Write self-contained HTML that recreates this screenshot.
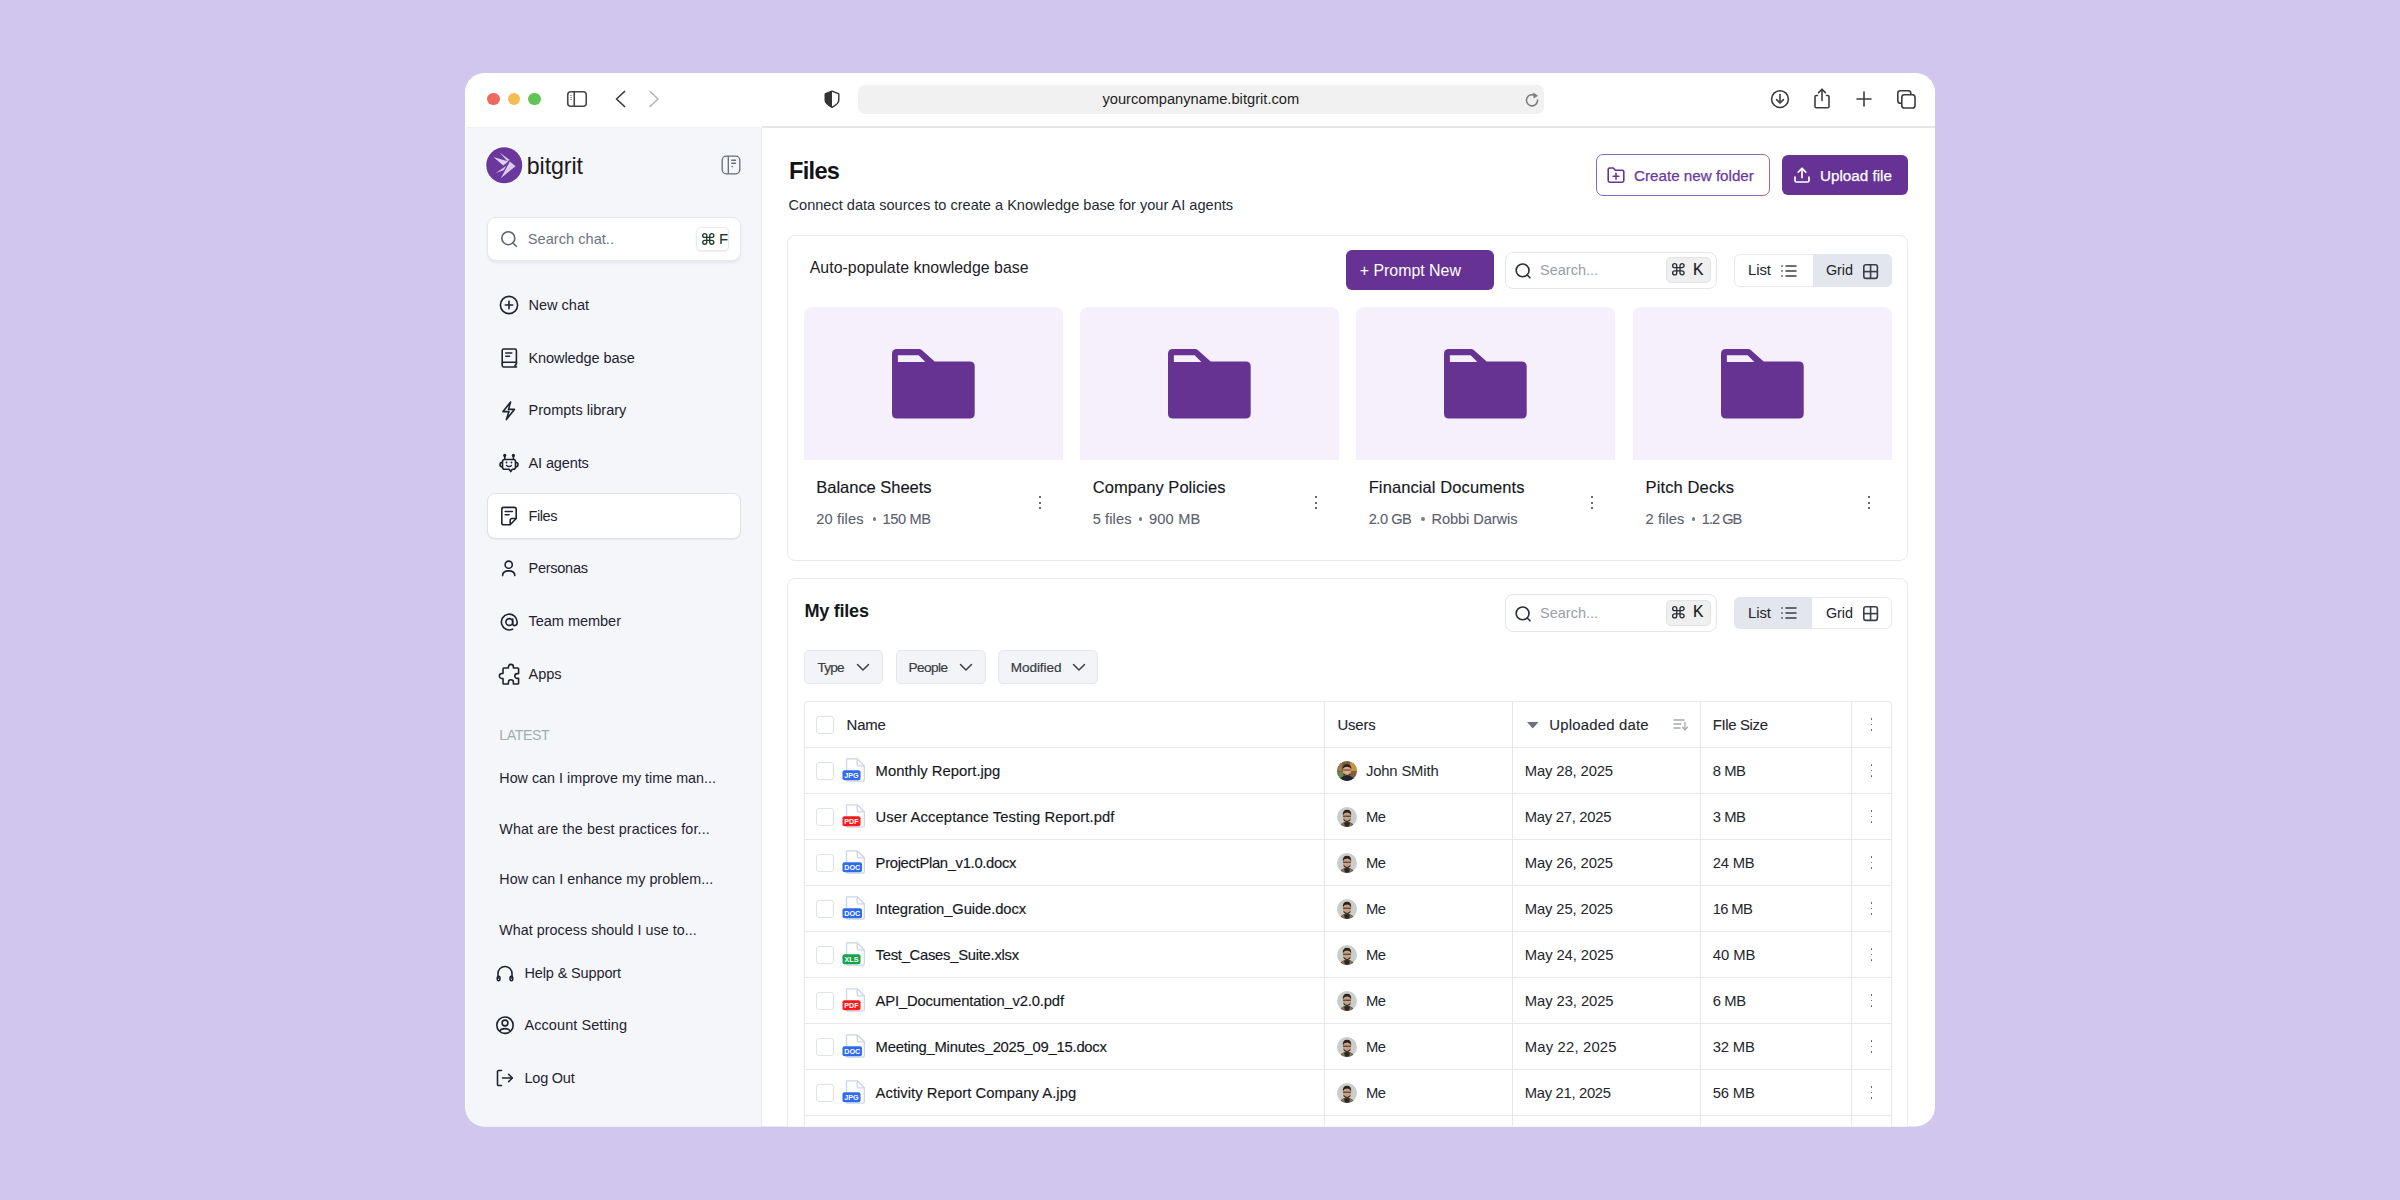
<!DOCTYPE html>
<html><head><meta charset="utf-8"><style>*{box-sizing:border-box;margin:0;padding:0}
html,body{width:2400px;height:1200px;overflow:hidden;background:#D1C6EE;font-family:"Liberation Sans",sans-serif}
#win{position:absolute;left:0;top:0;width:2400px;height:1200px;clip-path:inset(73px 465px 73.5px 465px round 20px);background:#fff}
.a{position:absolute}
.t{position:absolute;white-space:nowrap;line-height:1}
svg{position:absolute;overflow:visible}
</style></head>
<body>
<div id="win">
<div class="a" style="left:465px;top:73px;width:1470px;height:54px;background:#fff"></div>
<div class="a" style="left:762px;top:126px;width:1173px;height:1.5px;background:#E6E6E6"></div>
<div class="a" style="left:487.45px;top:92.95px;width:12.5px;height:12.5px;border-radius:50%;background:#EE6A5F"></div>
<div class="a" style="left:507.85px;top:92.95px;width:12.5px;height:12.5px;border-radius:50%;background:#F4BD50"></div>
<div class="a" style="left:528.35px;top:92.95px;width:12.5px;height:12.5px;border-radius:50%;background:#61C554"></div>
<svg style="left:566px;top:90px;" width="22" height="18" viewBox="0 0 22 18"><rect x="1.75" y="1.75" width="18.5" height="14.5" rx="3" fill="none" stroke="#474747" stroke-width="1.6"/><line x1="8.25" y1="1.75" x2="8.25" y2="16.25" stroke="#474747" stroke-width="1.6"/><line x1="5" y1="5" x2="5" y2="10" stroke="#474747" stroke-width="1" stroke-dasharray="1 1"/></svg>
<svg style="left:612px;top:88px;" width="16" height="22" viewBox="0 0 16 22"><polyline points="12.5,3.5 4.5,11 12.5,18.5" fill="none" stroke="#3a3a3a" stroke-width="1.7" stroke-linecap="round" stroke-linejoin="round"/></svg>
<svg style="left:646px;top:88px;" width="16" height="22" viewBox="0 0 16 22"><polyline points="4,3.5 12,11 4,18.5" fill="none" stroke="#b3b3b3" stroke-width="1.5" stroke-linecap="round" stroke-linejoin="round"/></svg>
<svg style="left:823px;top:89px;" width="18" height="21" viewBox="0 0 18 21"><path d="M9 2.2 L15.3 4.6 Q15.8 4.8 15.8 5.3 V11.2 Q15.8 14.6 9 18.4 Q2.2 14.6 2.2 11.2 V5.3 Q2.2 4.8 2.7 4.6 Z" fill="none" stroke="#333" stroke-width="1.4" stroke-linejoin="round"/><path d="M9 2.2 L2.7 4.6 Q2.2 4.8 2.2 5.3 V11.2 Q2.2 14.6 9 18.4 Z" fill="#333"/></svg>
<div class="a" style="left:858px;top:85px;width:686px;height:29px;background:#F1F1F1;border-radius:7px"></div>
<div class="t" style="left:1102.40px;top:91.80px;font-size:14.7px;color:#1f1f24;letter-spacing:0.004px;">yourcompanyname.bitgrit.com</div>
<svg style="left:1523px;top:89px;" width="18" height="20" viewBox="0 0 18 20"><path d="M12.9 7.2 A5.6 5.6 0 1 0 14.6 11" fill="none" stroke="#7d7d7d" stroke-width="1.6" stroke-linecap="round"/><path d="M10.2 3.6 L15 6.8 L10.6 9.6 Z" fill="#7d7d7d"/></svg>
<svg style="left:1770px;top:89px;" width="20" height="20" viewBox="0 0 20 20"><circle cx="10" cy="10.1" r="8.4" fill="none" stroke="#3d3d3d" stroke-width="1.6"/><line x1="10" y1="5.5" x2="10" y2="13.5" stroke="#3d3d3d" stroke-width="1.6" stroke-linecap="round"/><polyline points="6.6,10.6 10,14 13.4,10.6" fill="none" stroke="#3d3d3d" stroke-width="1.6" stroke-linecap="round" stroke-linejoin="round"/></svg>
<svg style="left:1812px;top:87px;" width="20" height="23" viewBox="0 0 20 23"><path d="M5.5 8.5 H4.3 Q3 8.5 3 9.8 V19.4 Q3 20.7 4.3 20.7 H15.7 Q17 20.7 17 19.4 V9.8 Q17 8.5 15.7 8.5 H14.5" fill="none" stroke="#3d3d3d" stroke-width="1.6" stroke-linecap="round"/><line x1="10" y1="2.5" x2="10" y2="13.5" stroke="#3d3d3d" stroke-width="1.6" stroke-linecap="round"/><polyline points="6.6,5.6 10,2.2 13.4,5.6" fill="none" stroke="#3d3d3d" stroke-width="1.6" stroke-linecap="round" stroke-linejoin="round"/></svg>
<svg style="left:1855px;top:90px;" width="18" height="18" viewBox="0 0 18 18"><line x1="9" y1="2" x2="9" y2="16" stroke="#3d3d3d" stroke-width="1.6" stroke-linecap="round"/><line x1="2" y1="9" x2="16" y2="9" stroke="#3d3d3d" stroke-width="1.6" stroke-linecap="round"/></svg>
<svg style="left:1896px;top:89px;" width="21" height="21" viewBox="0 0 21 21"><rect x="1.8" y="1.8" width="13" height="12.5" rx="2.6" fill="none" stroke="#3d3d3d" stroke-width="1.6"/><rect x="5.8" y="5.8" width="13.2" height="13.2" rx="2.6" fill="#fff" stroke="#3d3d3d" stroke-width="1.6"/></svg>
<div class="a" style="left:466.25px;top:126.5px;width:294.5px;height:1000px;background:#F5F6FA"></div>
<div class="a" style="left:466.25px;top:126.5px;width:294.5px;height:1.2px;background:#EEEFF2"></div>
<div class="a" style="left:760.5px;top:127.5px;width:1.5px;height:1000px;background:#E7E8EE"></div>
<svg style="left:484px;top:145px;" width="41" height="41" viewBox="0 0 41 41"><circle cx="20.25" cy="20.25" r="19.2" fill="#fff"/><circle cx="20.25" cy="20.25" r="18" fill="#6A389C"/><path d="M15.6 7.4 L25.8 14.9 L23.3 16.3 Z" fill="#D7C2EC"/><path d="M9.4 12.1 L24.3 16.6 L19.3 20.4 Z" fill="#E0CFF0"/><path d="M25.9 16.6 L31.6 21.2 L16.8 33.2 Z" fill="#DDCBEF"/><path d="M11.8 27.9 L22.6 20.6 L19.6 25.2 Z" fill="#D9C5EE"/></svg>
<div class="t" style="left:526.75px;top:155.11px;font-size:23.2px;color:#1a1a1a;letter-spacing:-0.079px;">bitgrit</div>
<svg style="left:721px;top:155px;" width="20" height="20" viewBox="0 0 20 20"><rect x="1.2" y="1.2" width="17.6" height="17.6" rx="4" fill="none" stroke="#676C74" stroke-width="1.3"/><line x1="7.3" y1="1.2" x2="7.3" y2="18.8" stroke="#676C74" stroke-width="1.3"/><line x1="10.8" y1="5.3" x2="14.5" y2="5.3" stroke="#676C74" stroke-width="1.4" stroke-linecap="round"/><line x1="10.8" y1="8.3" x2="14.5" y2="8.3" stroke="#676C74" stroke-width="1.4" stroke-linecap="round"/><circle cx="11.2" cy="11.6" r="0.8" fill="#676C74"/></svg>
<div class="a" style="left:487px;top:217px;width:253.5px;height:44px;background:#fff;border:1px solid #E6E8EE;border-radius:9px;box-shadow:0 1.5px 3px rgba(20,30,60,0.07)"></div>
<svg style="left:500px;top:230px;" width="18" height="18" viewBox="0 0 18 18"><circle cx="8.3" cy="8.2" r="6.5" fill="none" stroke="#5D6370" stroke-width="1.6"/><line x1="13" y1="13" x2="16.2" y2="16.2" stroke="#5D6370" stroke-width="1.6" stroke-linecap="round"/></svg>
<div class="t" style="left:527.80px;top:231.74px;font-size:14.6px;color:#6E7480;letter-spacing:0.017px;">Search chat..</div>
<div class="a" style="left:696px;top:227px;width:32.5px;height:24px;background:#fff;border:1px solid #E7E9EE;border-radius:5px;box-shadow:0 1px 2px rgba(20,30,60,0.08)"></div>
<svg style="left:701.6px;top:232.9px;" width="12.5" height="11.9" viewBox="0 0 12.5 11.9"><path d="M4.75 2.56 A2.04 1.89 0 1 0 2.71 4.45 H9.79 A2.04 1.89 0 1 0 7.75 2.56 V9.34 A2.04 1.89 0 1 0 9.79 7.45 H2.71 A2.04 1.89 0 1 0 4.75 9.34 Z" fill="none" stroke="#203A2C" stroke-width="1.35"/></svg>
<div class="t" style="left:719.00px;top:231.10px;font-size:15.0px;color:#203A2C;-webkit-text-stroke:0.1px #203A2C;">F</div>
<div class="t" style="left:528.50px;top:297.98px;font-size:14.55px;color:#1F2330;letter-spacing:-0.011px;">New chat</div>
<div class="t" style="left:528.50px;top:350.66px;font-size:14.55px;color:#1F2330;letter-spacing:-0.1px;">Knowledge base</div>
<div class="t" style="left:528.50px;top:403.34px;font-size:14.55px;color:#1F2330;letter-spacing:0.004px;">Prompts library</div>
<div class="t" style="left:528.50px;top:456.02px;font-size:14.55px;color:#1F2330;letter-spacing:-0.134px;">AI agents</div>
<div class="a" style="left:487px;top:493.3px;width:253.5px;height:45.5px;background:#fff;border:1.5px solid #DFE1E6;border-radius:8px;box-shadow:0 1px 1.5px rgba(30,40,60,0.06)"></div>
<div class="t" style="left:528.50px;top:508.70px;font-size:14.55px;color:#1F2330;letter-spacing:-0.425px;">Files</div>
<div class="t" style="left:528.50px;top:561.38px;font-size:14.55px;color:#1F2330;letter-spacing:-0.282px;">Personas</div>
<div class="t" style="left:528.50px;top:614.06px;font-size:14.55px;color:#1F2330;letter-spacing:-0.047px;">Team member</div>
<div class="t" style="left:528.50px;top:666.74px;font-size:14.55px;color:#1F2330;letter-spacing:-0.058px;">Apps</div>
<svg style="left:499px;top:295px;" width="20" height="20" viewBox="0 0 20 20"><circle cx="10" cy="10" r="8.6" fill="none" stroke="#1F2330" stroke-width="1.6"/><line x1="10" y1="6.3" x2="10" y2="13.7" stroke="#1F2330" stroke-width="1.6" stroke-linecap="round"/><line x1="6.3" y1="10" x2="13.7" y2="10" stroke="#1F2330" stroke-width="1.6" stroke-linecap="round"/></svg>
<svg style="left:499px;top:347px;" width="20" height="22" viewBox="0 0 20 22"><path d="M3.2 16.8 V3.6 Q3.2 2 4.8 2 H15.9 Q17.4 2 17.4 3.6 V16.5" fill="none" stroke="#1F2330" stroke-width="1.6"/><path d="M3.2 16.8 Q3.2 15.3 4.7 15.3 H17.4 V17 L16 18.6 L17.4 20 H4.7 Q3.2 20 3.2 18.4 Z" fill="none" stroke="#1F2330" stroke-width="1.6" stroke-linejoin="round"/><line x1="6.8" y1="6" x2="12.8" y2="6" stroke="#1F2330" stroke-width="1.6" stroke-linecap="round"/><line x1="6.8" y1="9.3" x2="10.5" y2="9.3" stroke="#1F2330" stroke-width="1.6" stroke-linecap="round"/></svg>
<svg style="left:499px;top:400px;" width="20" height="22" viewBox="0 0 20 22"><path d="M11.6 2 L4 11.6 H10 L7.4 19.6 L15.4 9.4 H9.5 Z" fill="none" stroke="#1F2330" stroke-width="1.6" stroke-linejoin="round"/></svg>
<svg style="left:498px;top:452px;" width="22" height="22" viewBox="0 0 22 22"><path d="M4.5 9.5 V15.3 Q4.5 17.3 6.5 17.3 H11.2 L12.7 19.6 L14.3 17.3 H15.5 Q17.5 17.3 17.5 15.3 V9.5 Q17.5 7.5 15.5 7.5 H6.5 Q4.5 7.5 4.5 9.5 Z" fill="none" stroke="#1F2330" stroke-width="1.6" stroke-linejoin="round"/><path d="M4.5 10.2 Q2 10.2 2 12.6 Q2 15 4.5 15 M17.5 10.2 Q20 10.2 20 12.6 Q20 15 17.5 15" fill="none" stroke="#1F2330" stroke-width="1.6"/><line x1="6.75" y1="7.5" x2="6.75" y2="3.8" stroke="#1F2330" stroke-width="1.6"/><line x1="15.4" y1="7.5" x2="15.4" y2="3.8" stroke="#1F2330" stroke-width="1.6"/><circle cx="6.75" cy="3.4" r="1.6" fill="#1F2330"/><circle cx="15.4" cy="3.4" r="1.6" fill="#1F2330"/><circle cx="8.5" cy="10.5" r="0.9" fill="#1F2330"/><circle cx="13.5" cy="10.5" r="0.9" fill="#1F2330"/><path d="M8.6 13.4 Q11 15.6 13.4 13.4" fill="none" stroke="#1F2330" stroke-width="1.4" stroke-linecap="round"/></svg>
<svg style="left:499px;top:505px;" width="20" height="22" viewBox="0 0 20 22"><path d="M17.2 13.5 V4.2 Q17.2 2.4 15.4 2.4 H4.6 Q2.8 2.4 2.8 4.2 V17.9 Q2.8 19.7 4.6 19.7 H11.2 Z" fill="none" stroke="#1F2330" stroke-width="1.6" stroke-linejoin="round"/><path d="M11.2 19.7 V15.3 Q11.2 13.5 13 13.5 H17.2" fill="none" stroke="#1F2330" stroke-width="1.6" stroke-linejoin="round"/><line x1="6.2" y1="6.5" x2="13.4" y2="6.5" stroke="#1F2330" stroke-width="1.6" stroke-linecap="round"/><line x1="6.2" y1="9.8" x2="10" y2="9.8" stroke="#1F2330" stroke-width="1.6" stroke-linecap="round"/></svg>
<svg style="left:499px;top:558px;" width="20" height="20" viewBox="0 0 20 20"><circle cx="9.7" cy="6.7" r="3.6" fill="none" stroke="#1F2330" stroke-width="1.6"/><path d="M3.6 17.6 Q3.6 12.9 9.7 12.9 Q15.8 12.9 15.8 17.6" fill="none" stroke="#1F2330" stroke-width="1.6" stroke-linecap="round"/></svg>
<svg style="left:499px;top:611px;" width="20" height="22" viewBox="0 0 20 22"><circle cx="10.3" cy="11" r="3.4" fill="none" stroke="#1F2330" stroke-width="1.6"/><path d="M13.7 8 V12.2 Q13.7 14.6 15.8 14.6 Q18.2 14.6 18.2 11 A7.9 7.9 0 1 0 13.6 18.2" fill="none" stroke="#1F2330" stroke-width="1.6" stroke-linecap="round"/></svg>
<svg style="left:498px;top:663px;" width="22" height="22" viewBox="0 0 22 22"><path d="M5 5.8 Q5 5 5.8 5 H10.4 V3.9 A2.5 2.5 0 0 1 15.4 3.9 V5 H19.8 Q20.6 5 20.6 5.8 V10.6 H19.2 A2.4 2.4 0 0 0 19.2 15.4 H20.6 V20.2 Q20.6 21 19.8 21 H15.4 V19.2 A2.5 2.5 0 0 0 10.4 19.2 V21 H5.8 Q5 21 5 20.2 V15.5 H3.9 A2.5 2.5 0 0 1 3.9 10.5 H5 Z" fill="none" stroke="#1F2330" stroke-width="1.6" stroke-linejoin="round"/></svg>
<div class="t" style="left:499.30px;top:728.48px;font-size:14.2px;color:#9DB1A9;letter-spacing:-0.422px;">LATEST</div>
<div class="t" style="left:499.30px;top:770.99px;font-size:14.3px;color:#1F2330;letter-spacing:0.018px;">How can I improve my time man...</div>
<div class="t" style="left:499.30px;top:821.59px;font-size:14.3px;color:#1F2330;letter-spacing:0.141px;">What are the best practices for...</div>
<div class="t" style="left:499.30px;top:872.19px;font-size:14.3px;color:#1F2330;letter-spacing:0.033px;">How can I enhance my problem...</div>
<div class="t" style="left:499.30px;top:922.79px;font-size:14.3px;color:#1F2330;letter-spacing:0.039px;">What process should I use to...</div>
<div class="t" style="left:524.50px;top:965.97px;font-size:14.5px;color:#1F2330;letter-spacing:-0.139px;">Help &amp; Support</div>
<div class="t" style="left:524.50px;top:1018.47px;font-size:14.5px;color:#1F2330;letter-spacing:0.066px;">Account Setting</div>
<div class="t" style="left:524.50px;top:1070.97px;font-size:14.5px;color:#1F2330;letter-spacing:-0.228px;">Log Out</div>
<svg style="left:495px;top:963px;" width="20" height="20" viewBox="0 0 20 20"><path d="M3 15.5 V10.5 A7 7 0 0 1 17 10.5 V15.5" fill="none" stroke="#1F2330" stroke-width="1.6" stroke-linecap="round"/><rect x="2.3" y="13.3" width="2.6" height="4.4" rx="1.3" fill="none" stroke="#1F2330" stroke-width="1.6"/><rect x="15.1" y="13.3" width="2.6" height="4.4" rx="1.3" fill="none" stroke="#1F2330" stroke-width="1.6"/></svg>
<svg style="left:495px;top:1015px;" width="20" height="20" viewBox="0 0 20 20"><circle cx="10" cy="10.2" r="8.2" fill="none" stroke="#1F2330" stroke-width="1.6"/><circle cx="10" cy="8" r="2.9" fill="none" stroke="#1F2330" stroke-width="1.6"/><path d="M4.8 16.4 Q5.6 13.6 10 13.6 Q14.4 13.6 15.2 16.4" fill="none" stroke="#1F2330" stroke-width="1.6"/></svg>
<svg style="left:495px;top:1068px;" width="20" height="20" viewBox="0 0 20 20"><path d="M6.5 2.5 H3.6 Q2.5 2.5 2.5 3.6 V16.4 Q2.5 17.5 3.6 17.5 H6.5" fill="none" stroke="#1F2330" stroke-width="1.6" stroke-linecap="round" stroke-linejoin="round"/><line x1="7.5" y1="10" x2="17.3" y2="10" stroke="#1F2330" stroke-width="1.6" stroke-linecap="round"/><polyline points="13.6,6.3 17.3,10 13.6,13.7" fill="none" stroke="#1F2330" stroke-width="1.6" stroke-linecap="round" stroke-linejoin="round"/></svg>
<div class="t" style="left:789.00px;top:159.72px;font-size:23.6px;color:#111317;font-weight:700;letter-spacing:-0.702px;">Files</div>
<div class="t" style="left:788.50px;top:197.64px;font-size:14.6px;color:#262A33;letter-spacing:-0.012px;">Connect data sources to create a Knowledge base for your AI agents</div>
<div class="a" style="left:1595.5px;top:154px;width:174px;height:42px;border:1.5px solid #9066BA;border-radius:7px;background:#fff"></div>
<svg style="left:1606px;top:166px;" width="20" height="18" viewBox="0 0 20 18"><path d="M2.2 3.6 Q2.2 2 3.8 2 H7.4 L9.4 4.2 H16.2 Q17.8 4.2 17.8 5.8 V14.6 Q17.8 16.2 16.2 16.2 H3.8 Q2.2 16.2 2.2 14.6 Z" fill="none" stroke="#663394" stroke-width="1.6" stroke-linejoin="round"/><line x1="10" y1="7.3" x2="10" y2="13.1" stroke="#663394" stroke-width="1.6" stroke-linecap="round"/><line x1="7.1" y1="10.2" x2="12.9" y2="10.2" stroke="#663394" stroke-width="1.6" stroke-linecap="round"/></svg>
<div class="t" style="left:1634.00px;top:167.73px;font-size:15.2px;color:#6A3A9A;-webkit-text-stroke:0.25px #6A3A9A;">Create new folder</div>
<div class="a" style="left:1782px;top:155px;width:126px;height:40px;background:#663394;border-radius:6px"></div>
<svg style="left:1793px;top:166px;" width="18" height="18" viewBox="0 0 18 18"><path d="M2 11 V14.6 Q2 16 3.4 16 H14.6 Q16 16 16 14.6 V11" fill="none" stroke="#fff" stroke-width="1.7" stroke-linecap="round" stroke-linejoin="round"/><line x1="9" y1="2.6" x2="9" y2="11.6" stroke="#fff" stroke-width="1.7" stroke-linecap="round"/><polyline points="5.2,6.2 9,2.4 12.8,6.2" fill="none" stroke="#fff" stroke-width="1.7" stroke-linecap="round" stroke-linejoin="round"/></svg>
<div class="t" style="left:1820.00px;top:167.73px;font-size:15.2px;color:#ffffff;letter-spacing:0.018px;-webkit-text-stroke:0.25px #ffffff;">Upload file</div>
<div class="a" style="left:787.4px;top:235.0px;width:1121px;height:326px;border:1.75px solid #EAEAEC;border-radius:8px;background:#fff"></div>
<div class="t" style="left:809.75px;top:259.74px;font-size:15.9px;color:#1E2127;letter-spacing:0.023px;">Auto-populate knowledge base</div>
<div class="a" style="left:1345.5px;top:249.8px;width:148.5px;height:40.5px;background:#663394;border-radius:6px"></div>
<div class="t" style="left:1359.75px;top:263.34px;font-size:15.9px;color:#ffffff;letter-spacing:0.004px;">+ Prompt New</div>
<div class="a" style="left:1504.5px;top:251.6px;width:212px;height:37.5px;background:#fff;border:1.5px solid #E4E6EB;border-radius:8px"></div>
<svg style="left:1513px;top:261.1px;" width="20" height="20" viewBox="0 0 20 20"><circle cx="9.6" cy="9.4" r="6.4" fill="none" stroke="#2A2E36" stroke-width="1.6"/><line x1="14.2" y1="14" x2="17" y2="16.8" stroke="#2A2E36" stroke-width="1.6" stroke-linecap="round"/></svg>
<div class="t" style="left:1540.00px;top:263.32px;font-size:14.5px;color:#9A9FA8;">Search...</div>
<div class="a" style="left:1665.75px;top:257.0px;width:45px;height:26px;background:#EFEFF0;border:1px solid #E3E3E6;border-radius:5px"></div>
<svg style="left:1672.25px;top:263.1px;" width="12.75" height="12.6" viewBox="0 0 12.75 12.6"><path d="M4.73 2.66 A2.03 1.99 0 1 0 2.70 4.65 H10.05 A2.03 1.99 0 1 0 8.03 2.66 V9.94 A2.03 1.99 0 1 0 10.05 7.95 H2.70 A2.03 1.99 0 1 0 4.73 9.94 Z" fill="none" stroke="#2A2D33" stroke-width="1.35"/></svg>
<div class="t" style="left:1693.00px;top:261.59px;font-size:15.6px;color:#16181C;-webkit-text-stroke:0.2px #16181C;">K</div>
<div class="a" style="left:1733.5px;top:254.1px;width:158.5px;height:32.5px;background:#fff;border:1.5px solid #E6E8EC;border-radius:6px"></div>
<div class="a" style="left:1813px;top:254.1px;width:79px;height:32.5px;background:#E3E6EC;border-radius:0 6px 6px 0"></div>
<div class="t" style="left:1748.00px;top:262.98px;font-size:14.9px;color:#22252B;letter-spacing:-0.056px;">List</div>
<div class="t" style="left:1826.00px;top:263.41px;font-size:14.4px;color:#22252B;letter-spacing:-0.072px;">Grid</div>
<svg style="left:1780px;top:262.6px;" width="18" height="16" viewBox="0 0 18 16"><g stroke="#3A3E46" stroke-width="1.5" stroke-linecap="round"><line x1="6" y1="3" x2="16" y2="3"/><line x1="6" y1="8" x2="16" y2="8"/><line x1="6" y1="13" x2="16" y2="13"/><line x1="1.8" y1="3" x2="2.2" y2="3"/><line x1="1.8" y1="8" x2="2.2" y2="8"/><line x1="1.8" y1="13" x2="2.2" y2="13"/></g></svg>
<svg style="left:1862px;top:262.6px;" width="18" height="17" viewBox="0 0 18 17"><rect x="1.8" y="1.8" width="13.6" height="13.6" rx="2.2" fill="none" stroke="#3A3E46" stroke-width="1.6"/><line x1="8.6" y1="1.8" x2="8.6" y2="15.4" stroke="#3A3E46" stroke-width="1.6"/><line x1="1.8" y1="8.6" x2="15.4" y2="8.6" stroke="#3A3E46" stroke-width="1.6"/></svg>
<div class="a" style="left:804px;top:307px;width:259px;height:153px;background:#F5F0FB;border-radius:8px 8px 0 0"></div>
<svg style="left:892px;top:348.5px;" width="83" height="70" viewBox="0 0 83 70"><path d="M0 5 Q0 0 5 0 H27 Q28.8 0 30 1.2 L42.7 12.6 H77.7 Q82.7 12.6 82.7 17.6 V64.6 Q82.7 69.6 77.7 69.6 H5 Q0 69.6 0 64.6 Z" fill="#663392"/><path d="M5.9 6.3 H26.6 L33.4 13 H5.9 Z" fill="#F5F0FB"/></svg>
<div class="t" style="left:816.30px;top:478.63px;font-size:16.5px;color:#16181D;letter-spacing:-0.022px;-webkit-text-stroke:0.15px #16181D;">Balance Sheets</div>
<div class="t" style="left:816.30px;top:512.24px;font-size:14.6px;color:#5A606C;letter-spacing:0.145px;-webkit-text-stroke:0.1px #5A606C;">20 files</div>
<div class="a" style="left:872.5px;top:517.4px;width:3.8px;height:3.8px;background:#7A7F88;border-radius:50%"></div>
<div class="t" style="left:882.60px;top:512.24px;font-size:14.6px;color:#5A606C;letter-spacing:-0.379px;-webkit-text-stroke:0.1px #5A606C;">150 MB</div>
<div class="a" style="left:1038.6px;top:495.75px;width:2.1px;height:2.1px;background:#33373E;border-radius:50%"></div>
<div class="a" style="left:1038.6px;top:501.55px;width:2.1px;height:2.1px;background:#33373E;border-radius:50%"></div>
<div class="a" style="left:1038.6px;top:507.34999999999997px;width:2.1px;height:2.1px;background:#33373E;border-radius:50%"></div>
<div class="a" style="left:1080.4px;top:307px;width:259px;height:153px;background:#F5F0FB;border-radius:8px 8px 0 0"></div>
<svg style="left:1168.4px;top:348.5px;" width="83" height="70" viewBox="0 0 83 70"><path d="M0 5 Q0 0 5 0 H27 Q28.8 0 30 1.2 L42.7 12.6 H77.7 Q82.7 12.6 82.7 17.6 V64.6 Q82.7 69.6 77.7 69.6 H5 Q0 69.6 0 64.6 Z" fill="#663392"/><path d="M5.9 6.3 H26.6 L33.4 13 H5.9 Z" fill="#F5F0FB"/></svg>
<div class="t" style="left:1092.70px;top:478.63px;font-size:16.5px;color:#16181D;letter-spacing:0.054px;-webkit-text-stroke:0.15px #16181D;">Company Policies</div>
<div class="t" style="left:1092.70px;top:512.24px;font-size:14.6px;color:#5A606C;letter-spacing:0.116px;-webkit-text-stroke:0.1px #5A606C;">5 files</div>
<div class="a" style="left:1138.5px;top:517.4px;width:3.8px;height:3.8px;background:#7A7F88;border-radius:50%"></div>
<div class="t" style="left:1149.00px;top:512.24px;font-size:14.6px;color:#5A606C;letter-spacing:0.181px;-webkit-text-stroke:0.1px #5A606C;">900 MB</div>
<div class="a" style="left:1315.0px;top:495.75px;width:2.1px;height:2.1px;background:#33373E;border-radius:50%"></div>
<div class="a" style="left:1315.0px;top:501.55px;width:2.1px;height:2.1px;background:#33373E;border-radius:50%"></div>
<div class="a" style="left:1315.0px;top:507.34999999999997px;width:2.1px;height:2.1px;background:#33373E;border-radius:50%"></div>
<div class="a" style="left:1356.4px;top:307px;width:259px;height:153px;background:#F5F0FB;border-radius:8px 8px 0 0"></div>
<svg style="left:1444.4px;top:348.5px;" width="83" height="70" viewBox="0 0 83 70"><path d="M0 5 Q0 0 5 0 H27 Q28.8 0 30 1.2 L42.7 12.6 H77.7 Q82.7 12.6 82.7 17.6 V64.6 Q82.7 69.6 77.7 69.6 H5 Q0 69.6 0 64.6 Z" fill="#663392"/><path d="M5.9 6.3 H26.6 L33.4 13 H5.9 Z" fill="#F5F0FB"/></svg>
<div class="t" style="left:1368.70px;top:478.63px;font-size:16.5px;color:#16181D;letter-spacing:0.099px;-webkit-text-stroke:0.15px #16181D;">Financial Documents</div>
<div class="t" style="left:1368.70px;top:512.24px;font-size:14.6px;color:#5A606C;letter-spacing:-0.456px;-webkit-text-stroke:0.1px #5A606C;">2.0 GB</div>
<div class="a" style="left:1420.8px;top:517.4px;width:3.8px;height:3.8px;background:#7A7F88;border-radius:50%"></div>
<div class="t" style="left:1431.40px;top:512.24px;font-size:14.6px;color:#5A606C;letter-spacing:-0.054px;-webkit-text-stroke:0.1px #5A606C;">Robbi Darwis</div>
<div class="a" style="left:1591.0px;top:495.75px;width:2.1px;height:2.1px;background:#33373E;border-radius:50%"></div>
<div class="a" style="left:1591.0px;top:501.55px;width:2.1px;height:2.1px;background:#33373E;border-radius:50%"></div>
<div class="a" style="left:1591.0px;top:507.34999999999997px;width:2.1px;height:2.1px;background:#33373E;border-radius:50%"></div>
<div class="a" style="left:1633.2px;top:307px;width:259px;height:153px;background:#F5F0FB;border-radius:8px 8px 0 0"></div>
<svg style="left:1721.2px;top:348.5px;" width="83" height="70" viewBox="0 0 83 70"><path d="M0 5 Q0 0 5 0 H27 Q28.8 0 30 1.2 L42.7 12.6 H77.7 Q82.7 12.6 82.7 17.6 V64.6 Q82.7 69.6 77.7 69.6 H5 Q0 69.6 0 64.6 Z" fill="#663392"/><path d="M5.9 6.3 H26.6 L33.4 13 H5.9 Z" fill="#F5F0FB"/></svg>
<div class="t" style="left:1645.50px;top:478.63px;font-size:16.5px;color:#16181D;letter-spacing:0.128px;-webkit-text-stroke:0.15px #16181D;">Pitch Decks</div>
<div class="t" style="left:1645.50px;top:512.24px;font-size:14.6px;color:#5A606C;letter-spacing:0.116px;-webkit-text-stroke:0.1px #5A606C;">2 files</div>
<div class="a" style="left:1691.6999999999998px;top:517.4px;width:3.8px;height:3.8px;background:#7A7F88;border-radius:50%"></div>
<div class="t" style="left:1701.80px;top:512.24px;font-size:14.6px;color:#5A606C;letter-spacing:-0.996px;-webkit-text-stroke:0.1px #5A606C;">1.2 GB</div>
<div class="a" style="left:1867.8px;top:495.75px;width:2.1px;height:2.1px;background:#33373E;border-radius:50%"></div>
<div class="a" style="left:1867.8px;top:501.55px;width:2.1px;height:2.1px;background:#33373E;border-radius:50%"></div>
<div class="a" style="left:1867.8px;top:507.34999999999997px;width:2.1px;height:2.1px;background:#33373E;border-radius:50%"></div>
<div class="a" style="left:787.2px;top:577.5px;width:1121px;height:600px;border:1.75px solid #EAEAEC;border-radius:8px;background:#fff"></div>
<div class="t" style="left:804.50px;top:602.47px;font-size:18.1px;color:#15171C;font-weight:700;letter-spacing:-0.275px;">My files</div>
<div class="a" style="left:1504.5px;top:594.2px;width:212px;height:37.5px;background:#fff;border:1.5px solid #E4E6EB;border-radius:8px"></div>
<svg style="left:1513px;top:603.7px;" width="20" height="20" viewBox="0 0 20 20"><circle cx="9.6" cy="9.4" r="6.4" fill="none" stroke="#2A2E36" stroke-width="1.6"/><line x1="14.2" y1="14" x2="17" y2="16.8" stroke="#2A2E36" stroke-width="1.6" stroke-linecap="round"/></svg>
<div class="t" style="left:1540.00px;top:605.92px;font-size:14.5px;color:#9A9FA8;">Search...</div>
<div class="a" style="left:1665.75px;top:599.6px;width:45px;height:26px;background:#EFEFF0;border:1px solid #E3E3E6;border-radius:5px"></div>
<svg style="left:1672.25px;top:605.7px;" width="12.75" height="12.6" viewBox="0 0 12.75 12.6"><path d="M4.73 2.66 A2.03 1.99 0 1 0 2.70 4.65 H10.05 A2.03 1.99 0 1 0 8.03 2.66 V9.94 A2.03 1.99 0 1 0 10.05 7.95 H2.70 A2.03 1.99 0 1 0 4.73 9.94 Z" fill="none" stroke="#2A2D33" stroke-width="1.35"/></svg>
<div class="t" style="left:1693.00px;top:604.19px;font-size:15.6px;color:#16181C;-webkit-text-stroke:0.2px #16181C;">K</div>
<div class="a" style="left:1733.5px;top:596.7px;width:158.5px;height:32.5px;background:#fff;border:1.5px solid #E6E8EC;border-radius:6px"></div>
<div class="a" style="left:1733.5px;top:596.7px;width:78px;height:32.5px;background:#E3E6EC;border-radius:6px 0 0 6px"></div>
<div class="t" style="left:1748.00px;top:605.58px;font-size:14.9px;color:#22252B;letter-spacing:-0.056px;">List</div>
<div class="t" style="left:1826.00px;top:606.01px;font-size:14.4px;color:#22252B;letter-spacing:-0.072px;">Grid</div>
<svg style="left:1780px;top:605.2px;" width="18" height="16" viewBox="0 0 18 16"><g stroke="#3A3E46" stroke-width="1.5" stroke-linecap="round"><line x1="6" y1="3" x2="16" y2="3"/><line x1="6" y1="8" x2="16" y2="8"/><line x1="6" y1="13" x2="16" y2="13"/><line x1="1.8" y1="3" x2="2.2" y2="3"/><line x1="1.8" y1="8" x2="2.2" y2="8"/><line x1="1.8" y1="13" x2="2.2" y2="13"/></g></svg>
<svg style="left:1862px;top:605.2px;" width="18" height="17" viewBox="0 0 18 17"><rect x="1.8" y="1.8" width="13.6" height="13.6" rx="2.2" fill="none" stroke="#3A3E46" stroke-width="1.6"/><line x1="8.6" y1="1.8" x2="8.6" y2="15.4" stroke="#3A3E46" stroke-width="1.6"/><line x1="1.8" y1="8.6" x2="15.4" y2="8.6" stroke="#3A3E46" stroke-width="1.6"/></svg>
<div class="a" style="left:804px;top:650px;width:78.5px;height:34px;background:#F3F4F7;border:1.5px solid #E5E7EC;border-radius:5px"></div>
<div class="t" style="left:817.50px;top:661.28px;font-size:13.6px;color:#3A3D44;letter-spacing:-0.804px;-webkit-text-stroke:0.2px #3A3D44;">Type</div>
<svg style="left:855.5px;top:660px;" width="14" height="14" viewBox="0 0 14 14"><polyline points="1.5,4.5 7,10 12.5,4.5" fill="none" stroke="#3B3F47" stroke-width="1.5" stroke-linecap="round" stroke-linejoin="round"/></svg>
<div class="a" style="left:895.5px;top:650px;width:90px;height:34px;background:#F3F4F7;border:1.5px solid #E5E7EC;border-radius:5px"></div>
<div class="t" style="left:908.40px;top:661.28px;font-size:13.6px;color:#3A3D44;letter-spacing:-0.553px;-webkit-text-stroke:0.2px #3A3D44;">People</div>
<svg style="left:958.5px;top:660px;" width="14" height="14" viewBox="0 0 14 14"><polyline points="1.5,4.5 7,10 12.5,4.5" fill="none" stroke="#3B3F47" stroke-width="1.5" stroke-linecap="round" stroke-linejoin="round"/></svg>
<div class="a" style="left:998.3px;top:650px;width:100.2px;height:34px;background:#F3F4F7;border:1.5px solid #E5E7EC;border-radius:5px"></div>
<div class="t" style="left:1010.70px;top:661.28px;font-size:13.6px;color:#3A3D44;letter-spacing:-0.073px;-webkit-text-stroke:0.2px #3A3D44;">Modified</div>
<svg style="left:1071.5px;top:660px;" width="14" height="14" viewBox="0 0 14 14"><polyline points="1.5,4.5 7,10 12.5,4.5" fill="none" stroke="#3B3F47" stroke-width="1.5" stroke-linecap="round" stroke-linejoin="round"/></svg>
<div class="a" style="left:803.5px;top:701.3px;width:1088.8px;height:500px;border:1.5px solid #E6E8EE;border-radius:4px 4px 0 0;background:#fff"></div>
<div class="a" style="left:1323.75px;top:701.3px;width:1.5px;height:500px;background:#E6E8EE"></div>
<div class="a" style="left:1511.55px;top:701.3px;width:1.5px;height:500px;background:#E6E8EE"></div>
<div class="a" style="left:1699.65px;top:701.3px;width:1.5px;height:500px;background:#E6E8EE"></div>
<div class="a" style="left:1850.75px;top:701.3px;width:1.5px;height:500px;background:#E6E8EE"></div>
<div class="a" style="left:803.5px;top:746.75px;width:1088.8px;height:1.5px;background:#E6E8EE"></div>
<div class="a" style="left:803.5px;top:792.75px;width:1088.8px;height:1.5px;background:#E6E8EE"></div>
<div class="a" style="left:803.5px;top:838.75px;width:1088.8px;height:1.5px;background:#E6E8EE"></div>
<div class="a" style="left:803.5px;top:884.75px;width:1088.8px;height:1.5px;background:#E6E8EE"></div>
<div class="a" style="left:803.5px;top:930.75px;width:1088.8px;height:1.5px;background:#E6E8EE"></div>
<div class="a" style="left:803.5px;top:976.75px;width:1088.8px;height:1.5px;background:#E6E8EE"></div>
<div class="a" style="left:803.5px;top:1022.75px;width:1088.8px;height:1.5px;background:#E6E8EE"></div>
<div class="a" style="left:803.5px;top:1068.75px;width:1088.8px;height:1.5px;background:#E6E8EE"></div>
<div class="a" style="left:803.5px;top:1114.75px;width:1088.8px;height:1.5px;background:#E6E8EE"></div>
<div class="a" style="left:816px;top:715.5px;width:18px;height:18px;border:1.5px solid #DDE1E8;border-radius:3px;background:#fff"></div>
<div class="t" style="left:846.60px;top:718.18px;font-size:14.9px;color:#23262D;letter-spacing:-0.161px;-webkit-text-stroke:0.1px #23262D;">Name</div>
<div class="t" style="left:1337.50px;top:718.18px;font-size:14.9px;color:#23262D;letter-spacing:-0.172px;-webkit-text-stroke:0.1px #23262D;">Users</div>
<svg style="left:1525px;top:719px;" width="16" height="12" viewBox="0 0 16 12"><path d="M2 3 H13.5 L7.75 9.5 Z" fill="#6B7079"/></svg>
<div class="t" style="left:1549.30px;top:718.18px;font-size:14.9px;color:#23262D;letter-spacing:0.206px;-webkit-text-stroke:0.1px #23262D;">Uploaded date</div>
<svg style="left:1672px;top:716px;" width="18" height="16" viewBox="0 0 18 16"><g stroke="#A4A9B1" stroke-width="1.3" stroke-linecap="round"><line x1="2" y1="4" x2="12" y2="4"/><line x1="2" y1="8" x2="9" y2="8"/><line x1="2" y1="12" x2="8" y2="12"/><line x1="13" y1="6.5" x2="13" y2="13.5"/><polyline points="10.6,11.2 13,13.7 15.4,11.2" fill="none"/></g></svg>
<div class="t" style="left:1712.80px;top:718.18px;font-size:14.9px;color:#23262D;letter-spacing:-0.345px;-webkit-text-stroke:0.1px #23262D;">FIle Size</div>
<div class="a" style="left:1870.6px;top:718.2px;width:1.8px;height:1.8px;background:#4F535B;border-radius:50%"></div>
<div class="a" style="left:1870.6px;top:723.6px;width:1.8px;height:1.8px;background:#4F535B;border-radius:50%"></div>
<div class="a" style="left:1870.6px;top:729.0px;width:1.8px;height:1.8px;background:#4F535B;border-radius:50%"></div>
<div class="a" style="left:816px;top:761.5px;width:18px;height:18px;border:1.5px solid #DDE1E8;border-radius:3px;background:#fff"></div>
<svg style="left:841.8px;top:757.2px;" width="24" height="26" viewBox="0 0 24 26"><path d="M4.5 1.8 H15.2 L22.3 8.8 V22.6 Q22.3 24.2 20.7 24.2 H6.1 Q4.5 24.2 4.5 22.6 Z" fill="#fff" stroke="#CDD5E2" stroke-width="1.3" stroke-linejoin="round"/><path d="M15.2 1.8 V6.9 Q15.2 8.8 17.1 8.8 H22.3" fill="none" stroke="#CDD5E2" stroke-width="1.3"/><rect x="0.5" y="13.2" width="18" height="10" rx="2" fill="#2E6BF0"/><text x="9.5" y="21" text-anchor="middle" font-family="Liberation Sans" font-weight="700" font-size="7.2" fill="#fff">JPG</text></svg>
<div class="t" style="left:875.60px;top:763.97px;font-size:14.8px;color:#16181D;letter-spacing:0.033px;-webkit-text-stroke:0.15px #16181D;">Monthly Report.jpg</div>
<svg style="left:1337.4px;top:760.5px;" width="20" height="20" viewBox="0 0 20 20"><defs><clipPath id="cav1"><circle cx="10" cy="10" r="10"/></clipPath></defs><g clip-path="url(#cav1)"><rect x="0" y="0" width="20" height="20" fill="#7E5E3E"/><rect x="0" y="11" width="6" height="9" fill="#5F8A4A"/><rect x="13" y="1" width="7" height="9" fill="#C8923F"/><rect x="0" y="2" width="5" height="8" fill="#9A7A55"/><path d="M2 20 Q4 14.5 10 14.5 Q16 14.5 18 20 Z" fill="#1E2430"/><ellipse cx="10" cy="9.6" rx="4.2" ry="5.2" fill="#D9A889"/><path d="M5.6 8 Q5.6 3.2 10 3.2 Q14.4 3.2 14.4 8 Q12.5 5.8 10 5.8 Q7.5 5.8 5.6 8 Z" fill="#2A1E18"/><path d="M6.5 12 Q10 16 13.5 12 L13 14 Q10 16.3 7 14 Z" fill="#3A2A22"/><line x1="6.2" y1="9" x2="13.8" y2="9" stroke="#2A2A2A" stroke-width="0.8"/></g></svg>
<div class="t" style="left:1365.90px;top:763.97px;font-size:14.8px;color:#23262D;letter-spacing:-0.142px;">John SMith</div>
<div class="t" style="left:1524.80px;top:763.97px;font-size:14.8px;color:#23262D;letter-spacing:-0.126px;">May 28, 2025</div>
<div class="t" style="left:1712.80px;top:763.97px;font-size:14.8px;color:#23262D;letter-spacing:-0.453px;">8 MB</div>
<div class="a" style="left:1870.6px;top:764.2px;width:1.8px;height:1.8px;background:#4F535B;border-radius:50%"></div>
<div class="a" style="left:1870.6px;top:769.6px;width:1.8px;height:1.8px;background:#4F535B;border-radius:50%"></div>
<div class="a" style="left:1870.6px;top:775.0px;width:1.8px;height:1.8px;background:#4F535B;border-radius:50%"></div>
<div class="a" style="left:816px;top:807.5px;width:18px;height:18px;border:1.5px solid #DDE1E8;border-radius:3px;background:#fff"></div>
<svg style="left:841.8px;top:803.2px;" width="24" height="26" viewBox="0 0 24 26"><path d="M4.5 1.8 H15.2 L22.3 8.8 V22.6 Q22.3 24.2 20.7 24.2 H6.1 Q4.5 24.2 4.5 22.6 Z" fill="#fff" stroke="#CDD5E2" stroke-width="1.3" stroke-linejoin="round"/><path d="M15.2 1.8 V6.9 Q15.2 8.8 17.1 8.8 H22.3" fill="none" stroke="#CDD5E2" stroke-width="1.3"/><rect x="0.5" y="13.2" width="18" height="10" rx="2" fill="#FF1B1B"/><text x="9.5" y="21" text-anchor="middle" font-family="Liberation Sans" font-weight="700" font-size="7.2" fill="#fff">PDF</text></svg>
<div class="t" style="left:875.60px;top:809.97px;font-size:14.8px;color:#16181D;letter-spacing:0.091px;-webkit-text-stroke:0.15px #16181D;">User Acceptance Testing Report.pdf</div>
<svg style="left:1337.4px;top:806.5px;" width="20" height="20" viewBox="0 0 20 20"><defs><clipPath id="cav2"><circle cx="10" cy="10" r="10"/></clipPath></defs><g clip-path="url(#cav2)"><rect x="0" y="0" width="20" height="20" fill="#C9CDCB"/><path d="M2.5 20 Q4 15 10 15 Q16 15 17.5 20 Z" fill="#2A2622"/><path d="M3.5 20 Q4.5 16 7 15.3 L8 20 Z M16.5 20 Q15.5 16 13 15.3 L12 20 Z" fill="#8A7358"/><ellipse cx="10" cy="10" rx="4" ry="5.1" fill="#C9A084"/><path d="M5.8 8.4 Q5.4 2.8 10 2.8 Q14.6 2.8 14.2 8.4 Q13 5.6 10 5.6 Q7 5.6 5.8 8.4 Z" fill="#2B221D"/><path d="M6.4 11.6 Q10 16.4 13.6 11.6 L13.2 13.8 Q10 16.6 6.8 13.8 Z" fill="#3B2C24"/><line x1="6" y1="9.2" x2="14" y2="9.2" stroke="#222" stroke-width="0.9"/></g></svg>
<div class="t" style="left:1365.90px;top:809.97px;font-size:14.8px;color:#23262D;letter-spacing:-0.472px;">Me</div>
<div class="t" style="left:1524.80px;top:809.97px;font-size:14.8px;color:#23262D;letter-spacing:-0.281px;">May 27, 2025</div>
<div class="t" style="left:1712.80px;top:809.97px;font-size:14.8px;color:#23262D;letter-spacing:-0.453px;">3 MB</div>
<div class="a" style="left:1870.6px;top:810.2px;width:1.8px;height:1.8px;background:#4F535B;border-radius:50%"></div>
<div class="a" style="left:1870.6px;top:815.6px;width:1.8px;height:1.8px;background:#4F535B;border-radius:50%"></div>
<div class="a" style="left:1870.6px;top:821.0px;width:1.8px;height:1.8px;background:#4F535B;border-radius:50%"></div>
<div class="a" style="left:816px;top:853.5px;width:18px;height:18px;border:1.5px solid #DDE1E8;border-radius:3px;background:#fff"></div>
<svg style="left:841.8px;top:849.2px;" width="24" height="26" viewBox="0 0 24 26"><path d="M4.5 1.8 H15.2 L22.3 8.8 V22.6 Q22.3 24.2 20.7 24.2 H6.1 Q4.5 24.2 4.5 22.6 Z" fill="#fff" stroke="#CDD5E2" stroke-width="1.3" stroke-linejoin="round"/><path d="M15.2 1.8 V6.9 Q15.2 8.8 17.1 8.8 H22.3" fill="none" stroke="#CDD5E2" stroke-width="1.3"/><rect x="0.5" y="13.2" width="19.5" height="10" rx="2" fill="#2E6BF0"/><text x="10.25" y="21" text-anchor="middle" font-family="Liberation Sans" font-weight="700" font-size="7.2" fill="#fff">DOC</text></svg>
<div class="t" style="left:875.60px;top:855.97px;font-size:14.8px;color:#16181D;letter-spacing:-0.323px;-webkit-text-stroke:0.15px #16181D;">ProjectPlan_v1.0.docx</div>
<svg style="left:1337.4px;top:852.5px;" width="20" height="20" viewBox="0 0 20 20"><defs><clipPath id="cav3"><circle cx="10" cy="10" r="10"/></clipPath></defs><g clip-path="url(#cav3)"><rect x="0" y="0" width="20" height="20" fill="#C9CDCB"/><path d="M2.5 20 Q4 15 10 15 Q16 15 17.5 20 Z" fill="#2A2622"/><path d="M3.5 20 Q4.5 16 7 15.3 L8 20 Z M16.5 20 Q15.5 16 13 15.3 L12 20 Z" fill="#8A7358"/><ellipse cx="10" cy="10" rx="4" ry="5.1" fill="#C9A084"/><path d="M5.8 8.4 Q5.4 2.8 10 2.8 Q14.6 2.8 14.2 8.4 Q13 5.6 10 5.6 Q7 5.6 5.8 8.4 Z" fill="#2B221D"/><path d="M6.4 11.6 Q10 16.4 13.6 11.6 L13.2 13.8 Q10 16.6 6.8 13.8 Z" fill="#3B2C24"/><line x1="6" y1="9.2" x2="14" y2="9.2" stroke="#222" stroke-width="0.9"/></g></svg>
<div class="t" style="left:1365.90px;top:855.97px;font-size:14.8px;color:#23262D;letter-spacing:-0.472px;">Me</div>
<div class="t" style="left:1524.80px;top:855.97px;font-size:14.8px;color:#23262D;letter-spacing:-0.126px;">May 26, 2025</div>
<div class="t" style="left:1712.80px;top:855.97px;font-size:14.8px;color:#23262D;letter-spacing:-0.218px;">24 MB</div>
<div class="a" style="left:1870.6px;top:856.2px;width:1.8px;height:1.8px;background:#4F535B;border-radius:50%"></div>
<div class="a" style="left:1870.6px;top:861.6px;width:1.8px;height:1.8px;background:#4F535B;border-radius:50%"></div>
<div class="a" style="left:1870.6px;top:867.0px;width:1.8px;height:1.8px;background:#4F535B;border-radius:50%"></div>
<div class="a" style="left:816px;top:899.5px;width:18px;height:18px;border:1.5px solid #DDE1E8;border-radius:3px;background:#fff"></div>
<svg style="left:841.8px;top:895.2px;" width="24" height="26" viewBox="0 0 24 26"><path d="M4.5 1.8 H15.2 L22.3 8.8 V22.6 Q22.3 24.2 20.7 24.2 H6.1 Q4.5 24.2 4.5 22.6 Z" fill="#fff" stroke="#CDD5E2" stroke-width="1.3" stroke-linejoin="round"/><path d="M15.2 1.8 V6.9 Q15.2 8.8 17.1 8.8 H22.3" fill="none" stroke="#CDD5E2" stroke-width="1.3"/><rect x="0.5" y="13.2" width="19.5" height="10" rx="2" fill="#2E6BF0"/><text x="10.25" y="21" text-anchor="middle" font-family="Liberation Sans" font-weight="700" font-size="7.2" fill="#fff">DOC</text></svg>
<div class="t" style="left:875.60px;top:901.97px;font-size:14.8px;color:#16181D;letter-spacing:-0.121px;-webkit-text-stroke:0.15px #16181D;">Integration_Guide.docx</div>
<svg style="left:1337.4px;top:898.5px;" width="20" height="20" viewBox="0 0 20 20"><defs><clipPath id="cav4"><circle cx="10" cy="10" r="10"/></clipPath></defs><g clip-path="url(#cav4)"><rect x="0" y="0" width="20" height="20" fill="#C9CDCB"/><path d="M2.5 20 Q4 15 10 15 Q16 15 17.5 20 Z" fill="#2A2622"/><path d="M3.5 20 Q4.5 16 7 15.3 L8 20 Z M16.5 20 Q15.5 16 13 15.3 L12 20 Z" fill="#8A7358"/><ellipse cx="10" cy="10" rx="4" ry="5.1" fill="#C9A084"/><path d="M5.8 8.4 Q5.4 2.8 10 2.8 Q14.6 2.8 14.2 8.4 Q13 5.6 10 5.6 Q7 5.6 5.8 8.4 Z" fill="#2B221D"/><path d="M6.4 11.6 Q10 16.4 13.6 11.6 L13.2 13.8 Q10 16.6 6.8 13.8 Z" fill="#3B2C24"/><line x1="6" y1="9.2" x2="14" y2="9.2" stroke="#222" stroke-width="0.9"/></g></svg>
<div class="t" style="left:1365.90px;top:901.97px;font-size:14.8px;color:#23262D;letter-spacing:-0.472px;">Me</div>
<div class="t" style="left:1524.80px;top:901.97px;font-size:14.8px;color:#23262D;letter-spacing:-0.126px;">May 25, 2025</div>
<div class="t" style="left:1712.80px;top:901.97px;font-size:14.8px;color:#23262D;letter-spacing:-0.693px;">16 MB</div>
<div class="a" style="left:1870.6px;top:902.2px;width:1.8px;height:1.8px;background:#4F535B;border-radius:50%"></div>
<div class="a" style="left:1870.6px;top:907.6px;width:1.8px;height:1.8px;background:#4F535B;border-radius:50%"></div>
<div class="a" style="left:1870.6px;top:913.0px;width:1.8px;height:1.8px;background:#4F535B;border-radius:50%"></div>
<div class="a" style="left:816px;top:945.5px;width:18px;height:18px;border:1.5px solid #DDE1E8;border-radius:3px;background:#fff"></div>
<svg style="left:841.8px;top:941.2px;" width="24" height="26" viewBox="0 0 24 26"><path d="M4.5 1.8 H15.2 L22.3 8.8 V22.6 Q22.3 24.2 20.7 24.2 H6.1 Q4.5 24.2 4.5 22.6 Z" fill="#fff" stroke="#CDD5E2" stroke-width="1.3" stroke-linejoin="round"/><path d="M15.2 1.8 V6.9 Q15.2 8.8 17.1 8.8 H22.3" fill="none" stroke="#CDD5E2" stroke-width="1.3"/><rect x="0.5" y="13.2" width="18" height="10" rx="2" fill="#16A34A"/><text x="9.5" y="21" text-anchor="middle" font-family="Liberation Sans" font-weight="700" font-size="7.2" fill="#fff">XLS</text></svg>
<div class="t" style="left:875.60px;top:947.97px;font-size:14.8px;color:#16181D;letter-spacing:-0.269px;-webkit-text-stroke:0.15px #16181D;">Test_Cases_Suite.xlsx</div>
<svg style="left:1337.4px;top:944.5px;" width="20" height="20" viewBox="0 0 20 20"><defs><clipPath id="cav5"><circle cx="10" cy="10" r="10"/></clipPath></defs><g clip-path="url(#cav5)"><rect x="0" y="0" width="20" height="20" fill="#C9CDCB"/><path d="M2.5 20 Q4 15 10 15 Q16 15 17.5 20 Z" fill="#2A2622"/><path d="M3.5 20 Q4.5 16 7 15.3 L8 20 Z M16.5 20 Q15.5 16 13 15.3 L12 20 Z" fill="#8A7358"/><ellipse cx="10" cy="10" rx="4" ry="5.1" fill="#C9A084"/><path d="M5.8 8.4 Q5.4 2.8 10 2.8 Q14.6 2.8 14.2 8.4 Q13 5.6 10 5.6 Q7 5.6 5.8 8.4 Z" fill="#2B221D"/><path d="M6.4 11.6 Q10 16.4 13.6 11.6 L13.2 13.8 Q10 16.6 6.8 13.8 Z" fill="#3B2C24"/><line x1="6" y1="9.2" x2="14" y2="9.2" stroke="#222" stroke-width="0.9"/></g></svg>
<div class="t" style="left:1365.90px;top:947.97px;font-size:14.8px;color:#23262D;letter-spacing:-0.472px;">Me</div>
<div class="t" style="left:1524.80px;top:947.97px;font-size:14.8px;color:#23262D;letter-spacing:-0.099px;">May 24, 2025</div>
<div class="t" style="left:1712.80px;top:947.97px;font-size:14.8px;color:#23262D;letter-spacing:-0.043px;">40 MB</div>
<div class="a" style="left:1870.6px;top:948.2px;width:1.8px;height:1.8px;background:#4F535B;border-radius:50%"></div>
<div class="a" style="left:1870.6px;top:953.6px;width:1.8px;height:1.8px;background:#4F535B;border-radius:50%"></div>
<div class="a" style="left:1870.6px;top:959.0px;width:1.8px;height:1.8px;background:#4F535B;border-radius:50%"></div>
<div class="a" style="left:816px;top:991.5px;width:18px;height:18px;border:1.5px solid #DDE1E8;border-radius:3px;background:#fff"></div>
<svg style="left:841.8px;top:987.2px;" width="24" height="26" viewBox="0 0 24 26"><path d="M4.5 1.8 H15.2 L22.3 8.8 V22.6 Q22.3 24.2 20.7 24.2 H6.1 Q4.5 24.2 4.5 22.6 Z" fill="#fff" stroke="#CDD5E2" stroke-width="1.3" stroke-linejoin="round"/><path d="M15.2 1.8 V6.9 Q15.2 8.8 17.1 8.8 H22.3" fill="none" stroke="#CDD5E2" stroke-width="1.3"/><rect x="0.5" y="13.2" width="18" height="10" rx="2" fill="#FF1B1B"/><text x="9.5" y="21" text-anchor="middle" font-family="Liberation Sans" font-weight="700" font-size="7.2" fill="#fff">PDF</text></svg>
<div class="t" style="left:875.60px;top:993.97px;font-size:14.8px;color:#16181D;letter-spacing:-0.162px;-webkit-text-stroke:0.15px #16181D;">API_Documentation_v2.0.pdf</div>
<svg style="left:1337.4px;top:990.5px;" width="20" height="20" viewBox="0 0 20 20"><defs><clipPath id="cav6"><circle cx="10" cy="10" r="10"/></clipPath></defs><g clip-path="url(#cav6)"><rect x="0" y="0" width="20" height="20" fill="#C9CDCB"/><path d="M2.5 20 Q4 15 10 15 Q16 15 17.5 20 Z" fill="#2A2622"/><path d="M3.5 20 Q4.5 16 7 15.3 L8 20 Z M16.5 20 Q15.5 16 13 15.3 L12 20 Z" fill="#8A7358"/><ellipse cx="10" cy="10" rx="4" ry="5.1" fill="#C9A084"/><path d="M5.8 8.4 Q5.4 2.8 10 2.8 Q14.6 2.8 14.2 8.4 Q13 5.6 10 5.6 Q7 5.6 5.8 8.4 Z" fill="#2B221D"/><path d="M6.4 11.6 Q10 16.4 13.6 11.6 L13.2 13.8 Q10 16.6 6.8 13.8 Z" fill="#3B2C24"/><line x1="6" y1="9.2" x2="14" y2="9.2" stroke="#222" stroke-width="0.9"/></g></svg>
<div class="t" style="left:1365.90px;top:993.97px;font-size:14.8px;color:#23262D;letter-spacing:-0.472px;">Me</div>
<div class="t" style="left:1524.80px;top:993.97px;font-size:14.8px;color:#23262D;letter-spacing:-0.081px;">May 23, 2025</div>
<div class="t" style="left:1712.80px;top:993.97px;font-size:14.8px;color:#23262D;letter-spacing:-0.386px;">6 MB</div>
<div class="a" style="left:1870.6px;top:994.2px;width:1.8px;height:1.8px;background:#4F535B;border-radius:50%"></div>
<div class="a" style="left:1870.6px;top:999.6px;width:1.8px;height:1.8px;background:#4F535B;border-radius:50%"></div>
<div class="a" style="left:1870.6px;top:1005.0px;width:1.8px;height:1.8px;background:#4F535B;border-radius:50%"></div>
<div class="a" style="left:816px;top:1037.5px;width:18px;height:18px;border:1.5px solid #DDE1E8;border-radius:3px;background:#fff"></div>
<svg style="left:841.8px;top:1033.2px;" width="24" height="26" viewBox="0 0 24 26"><path d="M4.5 1.8 H15.2 L22.3 8.8 V22.6 Q22.3 24.2 20.7 24.2 H6.1 Q4.5 24.2 4.5 22.6 Z" fill="#fff" stroke="#CDD5E2" stroke-width="1.3" stroke-linejoin="round"/><path d="M15.2 1.8 V6.9 Q15.2 8.8 17.1 8.8 H22.3" fill="none" stroke="#CDD5E2" stroke-width="1.3"/><rect x="0.5" y="13.2" width="19.5" height="10" rx="2" fill="#2E6BF0"/><text x="10.25" y="21" text-anchor="middle" font-family="Liberation Sans" font-weight="700" font-size="7.2" fill="#fff">DOC</text></svg>
<div class="t" style="left:875.60px;top:1039.97px;font-size:14.8px;color:#16181D;letter-spacing:-0.242px;-webkit-text-stroke:0.15px #16181D;">Meeting_Minutes_2025_09_15.docx</div>
<svg style="left:1337.4px;top:1036.5px;" width="20" height="20" viewBox="0 0 20 20"><defs><clipPath id="cav7"><circle cx="10" cy="10" r="10"/></clipPath></defs><g clip-path="url(#cav7)"><rect x="0" y="0" width="20" height="20" fill="#C9CDCB"/><path d="M2.5 20 Q4 15 10 15 Q16 15 17.5 20 Z" fill="#2A2622"/><path d="M3.5 20 Q4.5 16 7 15.3 L8 20 Z M16.5 20 Q15.5 16 13 15.3 L12 20 Z" fill="#8A7358"/><ellipse cx="10" cy="10" rx="4" ry="5.1" fill="#C9A084"/><path d="M5.8 8.4 Q5.4 2.8 10 2.8 Q14.6 2.8 14.2 8.4 Q13 5.6 10 5.6 Q7 5.6 5.8 8.4 Z" fill="#2B221D"/><path d="M6.4 11.6 Q10 16.4 13.6 11.6 L13.2 13.8 Q10 16.6 6.8 13.8 Z" fill="#3B2C24"/><line x1="6" y1="9.2" x2="14" y2="9.2" stroke="#222" stroke-width="0.9"/></g></svg>
<div class="t" style="left:1365.90px;top:1039.97px;font-size:14.8px;color:#23262D;letter-spacing:-0.472px;">Me</div>
<div class="t" style="left:1524.80px;top:1039.97px;font-size:14.8px;color:#23262D;letter-spacing:0.183px;">May 22, 2025</div>
<div class="t" style="left:1712.80px;top:1039.97px;font-size:14.8px;color:#23262D;letter-spacing:-0.193px;">32 MB</div>
<div class="a" style="left:1870.6px;top:1040.1999999999998px;width:1.8px;height:1.8px;background:#4F535B;border-radius:50%"></div>
<div class="a" style="left:1870.6px;top:1045.6px;width:1.8px;height:1.8px;background:#4F535B;border-radius:50%"></div>
<div class="a" style="left:1870.6px;top:1051.0px;width:1.8px;height:1.8px;background:#4F535B;border-radius:50%"></div>
<div class="a" style="left:816px;top:1083.5px;width:18px;height:18px;border:1.5px solid #DDE1E8;border-radius:3px;background:#fff"></div>
<svg style="left:841.8px;top:1079.2px;" width="24" height="26" viewBox="0 0 24 26"><path d="M4.5 1.8 H15.2 L22.3 8.8 V22.6 Q22.3 24.2 20.7 24.2 H6.1 Q4.5 24.2 4.5 22.6 Z" fill="#fff" stroke="#CDD5E2" stroke-width="1.3" stroke-linejoin="round"/><path d="M15.2 1.8 V6.9 Q15.2 8.8 17.1 8.8 H22.3" fill="none" stroke="#CDD5E2" stroke-width="1.3"/><rect x="0.5" y="13.2" width="18" height="10" rx="2" fill="#2E6BF0"/><text x="9.5" y="21" text-anchor="middle" font-family="Liberation Sans" font-weight="700" font-size="7.2" fill="#fff">JPG</text></svg>
<div class="t" style="left:875.60px;top:1085.97px;font-size:14.8px;color:#16181D;letter-spacing:0.026px;-webkit-text-stroke:0.15px #16181D;">Activity Report Company A.jpg</div>
<svg style="left:1337.4px;top:1082.5px;" width="20" height="20" viewBox="0 0 20 20"><defs><clipPath id="cav8"><circle cx="10" cy="10" r="10"/></clipPath></defs><g clip-path="url(#cav8)"><rect x="0" y="0" width="20" height="20" fill="#C9CDCB"/><path d="M2.5 20 Q4 15 10 15 Q16 15 17.5 20 Z" fill="#2A2622"/><path d="M3.5 20 Q4.5 16 7 15.3 L8 20 Z M16.5 20 Q15.5 16 13 15.3 L12 20 Z" fill="#8A7358"/><ellipse cx="10" cy="10" rx="4" ry="5.1" fill="#C9A084"/><path d="M5.8 8.4 Q5.4 2.8 10 2.8 Q14.6 2.8 14.2 8.4 Q13 5.6 10 5.6 Q7 5.6 5.8 8.4 Z" fill="#2B221D"/><path d="M6.4 11.6 Q10 16.4 13.6 11.6 L13.2 13.8 Q10 16.6 6.8 13.8 Z" fill="#3B2C24"/><line x1="6" y1="9.2" x2="14" y2="9.2" stroke="#222" stroke-width="0.9"/></g></svg>
<div class="t" style="left:1365.90px;top:1085.97px;font-size:14.8px;color:#23262D;letter-spacing:-0.472px;">Me</div>
<div class="t" style="left:1524.80px;top:1085.97px;font-size:14.8px;color:#23262D;letter-spacing:-0.317px;">May 21, 2025</div>
<div class="t" style="left:1712.80px;top:1085.97px;font-size:14.8px;color:#23262D;letter-spacing:-0.193px;">56 MB</div>
<div class="a" style="left:1870.6px;top:1086.1999999999998px;width:1.8px;height:1.8px;background:#4F535B;border-radius:50%"></div>
<div class="a" style="left:1870.6px;top:1091.6px;width:1.8px;height:1.8px;background:#4F535B;border-radius:50%"></div>
<div class="a" style="left:1870.6px;top:1097.0px;width:1.8px;height:1.8px;background:#4F535B;border-radius:50%"></div>
</div>
</body></html>
